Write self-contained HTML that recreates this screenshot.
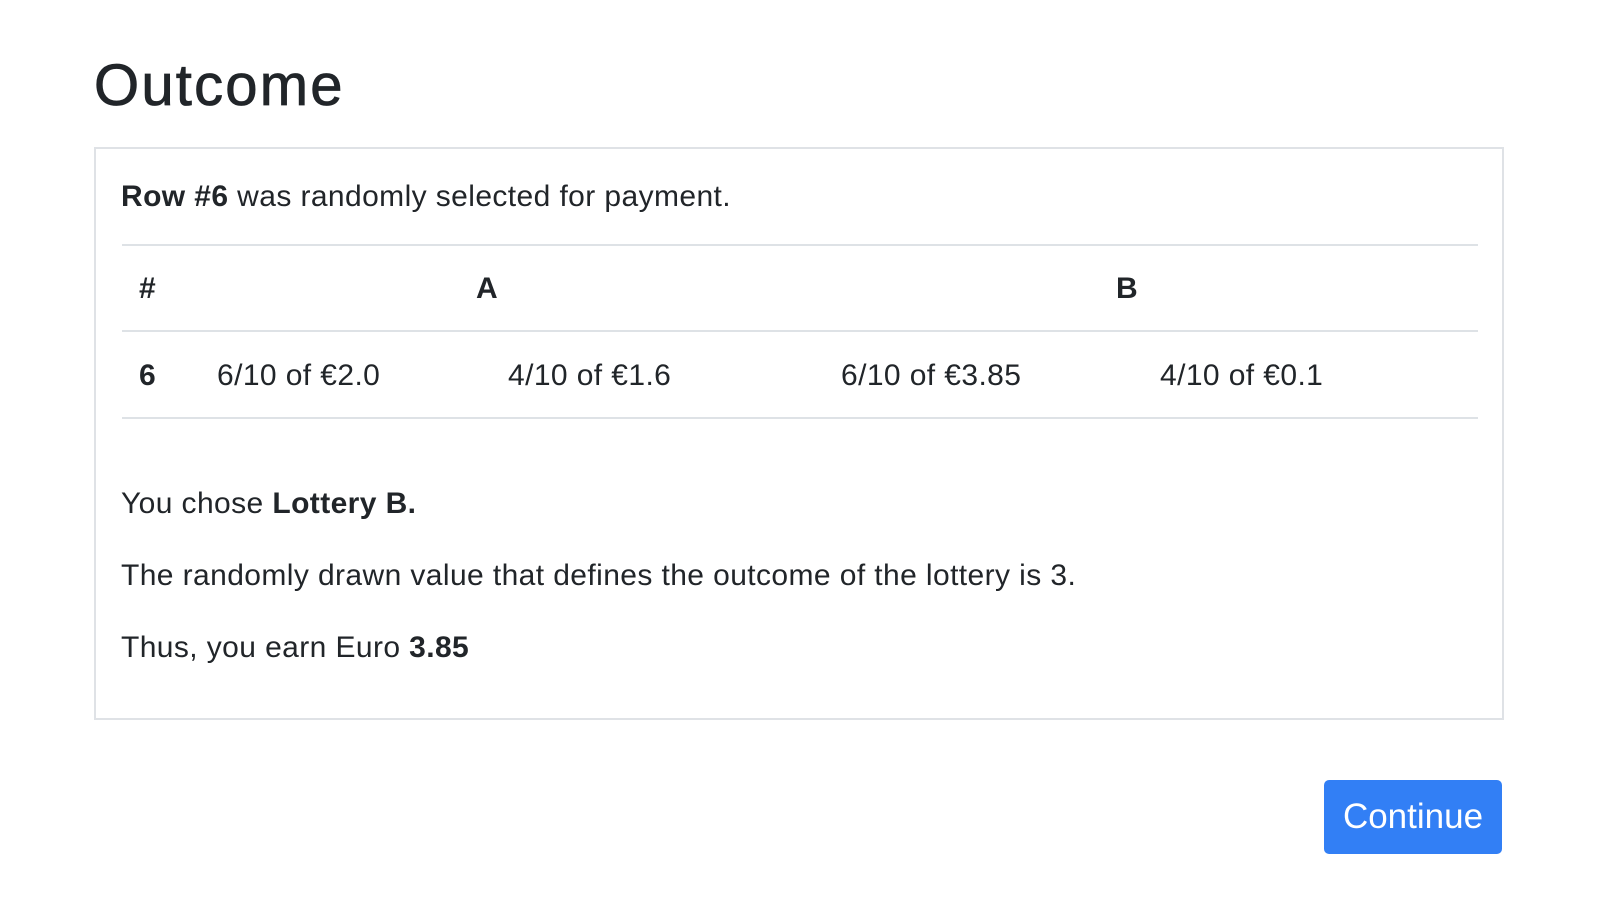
<!DOCTYPE html>
<html><head><meta charset="utf-8"><style>
body{margin:0;width:1614px;height:908px;background:#fff;font-family:"Liberation Sans",sans-serif;color:#212529;position:relative;overflow:hidden}
.a{position:absolute;white-space:nowrap;line-height:1}
h1{position:absolute;left:94px;top:57px;margin:0;font-size:58px;font-weight:500;line-height:1;letter-spacing:2.2px;-webkit-text-stroke:0.8px #212529}
.card{position:absolute;left:94px;top:147px;width:1410px;height:573px;border:2px solid #dfe2e6;box-sizing:border-box}
.hr{position:absolute;left:122px;width:1356px;height:2px;background:#dee2e6}
.t{font-size:30px;letter-spacing:0.4px}
b{font-weight:700}
.btn{position:absolute;left:1324px;top:780px;width:178px;height:74px;background:#327ff5;border-radius:5px;color:#fff;font-size:35px;display:flex;align-items:center;justify-content:center}
</style></head><body>
<h1>Outcome</h1>
<div class="card"></div>
<div class="a t" style="left:121px;top:182px"><b>Row #6</b> was randomly selected for payment.</div>
<div class="hr" style="top:244px"></div>
<div class="a t" style="left:139px;top:274px"><b>#</b></div>
<div class="a t" style="left:476px;top:274px"><b>A</b></div>
<div class="a t" style="left:1116px;top:274px"><b>B</b></div>
<div class="hr" style="top:330px"></div>
<div class="a t" style="left:139px;top:361px"><b>6</b></div>
<div class="a t" style="left:217px;top:361px">6/10 of €2.0</div>
<div class="a t" style="left:508px;top:361px">4/10 of €1.6</div>
<div class="a t" style="left:841px;top:361px">6/10 of €3.85</div>
<div class="a t" style="left:1160px;top:361px">4/10 of €0.1</div>
<div class="hr" style="top:417px"></div>
<div class="a t" style="left:121px;top:489px">You chose <b>Lottery B.</b></div>
<div class="a t" style="left:121px;top:561px">The randomly drawn value that defines the outcome of the lottery is 3.</div>
<div class="a t" style="left:121px;top:633px">Thus, you earn Euro <b>3.85</b></div>
<div class="btn">Continue</div>
</body></html>
